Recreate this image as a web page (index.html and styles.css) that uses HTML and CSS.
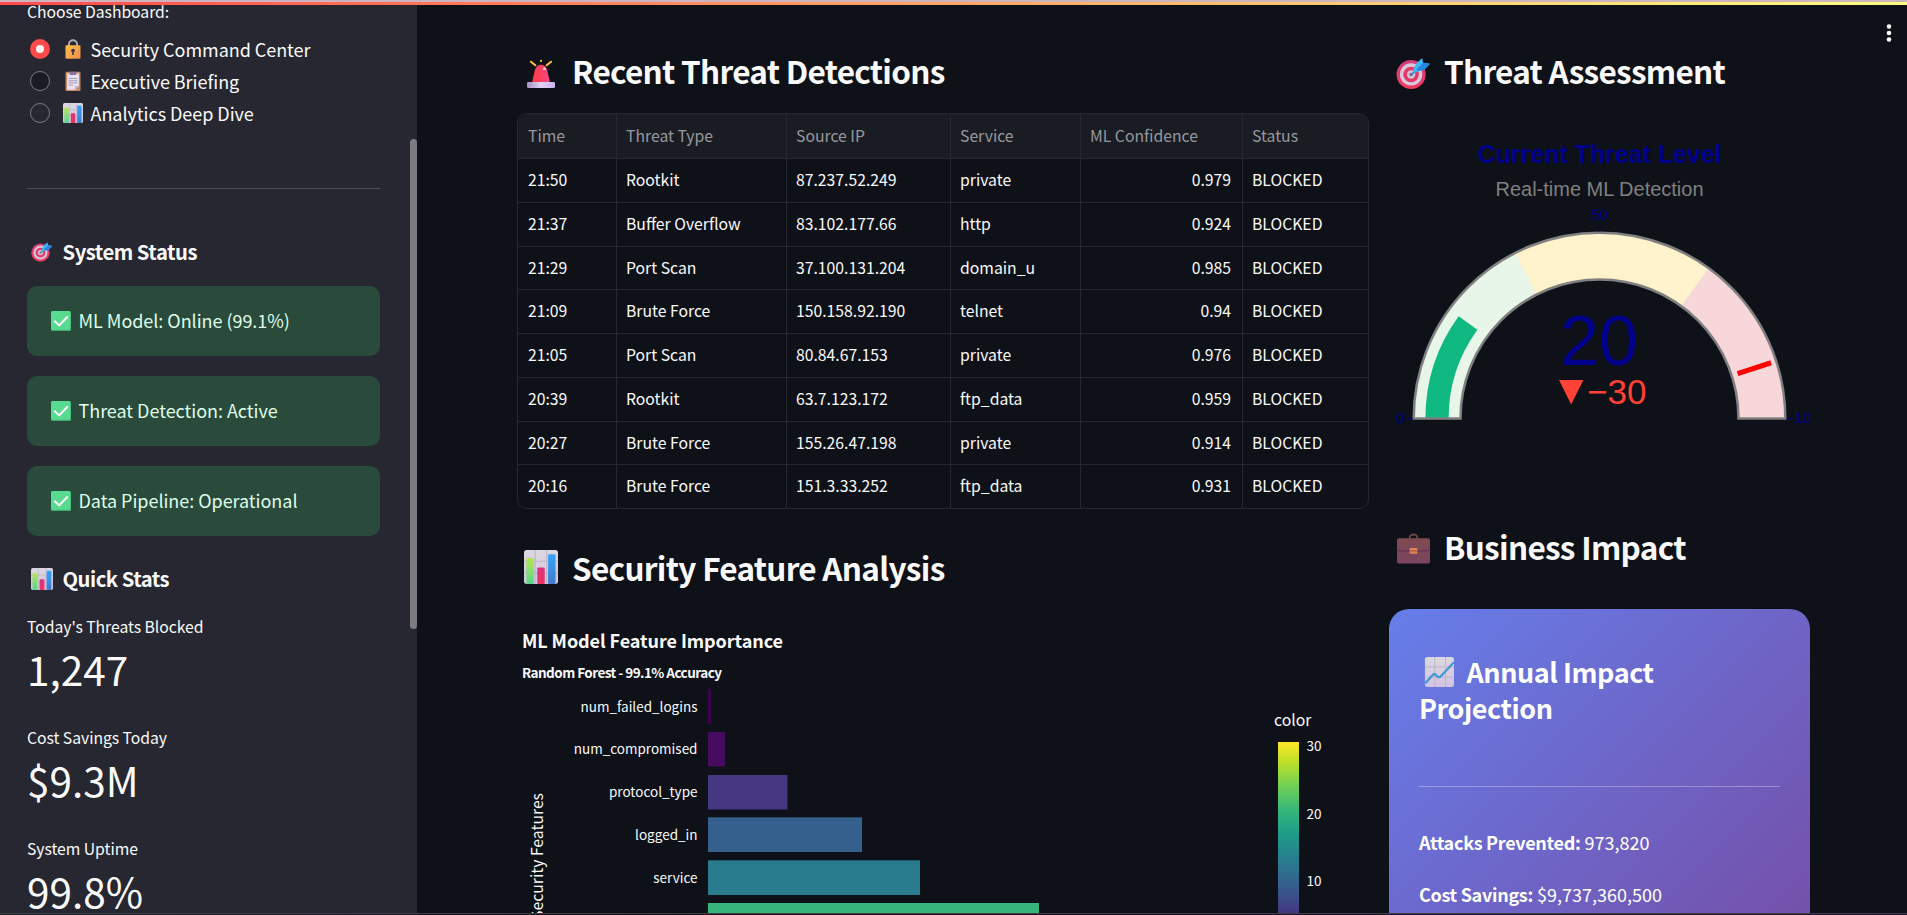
FILE: index.html
```html
<!DOCTYPE html>
<html lang="en">
<head>
<meta charset="utf-8">
<title>Security Dashboard</title>
<link rel="stylesheet" href="styles.css">
</head>
<body>
<svg class="defs" width="0" height="0" aria-hidden="true">
  <defs>
    <linearGradient id="gGold" x1="0" y1="0" x2="1" y2="1"><stop offset="0" stop-color="#fdc445"/><stop offset="1" stop-color="#f08a4b"/></linearGradient>
    <linearGradient id="gGreen" x1="0" y1="0" x2="0" y2="1"><stop offset="0" stop-color="#b5e550"/><stop offset="1" stop-color="#57d68d"/></linearGradient>
    <linearGradient id="gBlue" x1="0" y1="0" x2="0" y2="1"><stop offset="0" stop-color="#34a6f8"/><stop offset="1" stop-color="#3f7bd0"/></linearGradient>
    <linearGradient id="gPink" x1="0" y1="0" x2="0" y2="1"><stop offset="0" stop-color="#d7357f"/><stop offset="1" stop-color="#f0335f"/></linearGradient>
    <linearGradient id="gPaper" x1="0" y1="0" x2="0" y2="1"><stop offset="0" stop-color="#dcd8e0"/><stop offset="1" stop-color="#d3c4e2"/></linearGradient>
    <linearGradient id="gRed" x1="0" y1="0" x2="1" y2="0"><stop offset="0" stop-color="#ff3a3a"/><stop offset="1" stop-color="#f8468c"/></linearGradient>
    <linearGradient id="gBase" x1="0" y1="0" x2="1" y2="0"><stop offset="0" stop-color="#a58fc0"/><stop offset=".5" stop-color="#e3d5f5"/><stop offset="1" stop-color="#c9b0ee"/></linearGradient>
    <linearGradient id="gTarget" x1="0" y1="0" x2="0" y2="1"><stop offset="0" stop-color="#cf3f7c"/><stop offset="1" stop-color="#f23a5d"/></linearGradient>
    <linearGradient id="gCase" x1="0" y1="0" x2="0" y2="1"><stop offset="0" stop-color="#7f4b50"/><stop offset="1" stop-color="#7b4460"/></linearGradient>
    <linearGradient id="viridis" x1="0" y1="742" x2="0" y2="946" gradientUnits="userSpaceOnUse">
      <stop offset="0" stop-color="#fde725"/><stop offset=".111" stop-color="#b5de2b"/><stop offset=".222" stop-color="#6ece58"/><stop offset=".333" stop-color="#35b779"/><stop offset=".444" stop-color="#1f9e89"/><stop offset=".556" stop-color="#26828e"/><stop offset=".667" stop-color="#31688e"/><stop offset=".778" stop-color="#3e4989"/><stop offset=".889" stop-color="#482878"/><stop offset="1" stop-color="#440154"/>
    </linearGradient>
    <symbol id="lock" viewBox="0 0 32 32">
      <path d="M9.5 13V8.5a6.5 6.5 0 0 1 13 0V13" fill="none" stroke="#b4abbd" stroke-width="3"/>
      <rect x="4" y="10" width="24" height="21.5" rx="2" fill="url(#gGold)"/>
      <circle cx="16" cy="18.5" r="3" fill="#453455"/><path d="M14.7 19h2.6v6.5h-2.6z" fill="#453455"/>
    </symbol>
    <symbol id="clipboard" viewBox="0 0 32 32">
      <rect x="4" y="1" width="24" height="31" rx="2" fill="#c98a63"/>
      <path d="M6.500 4h19v20l-6 6h-13z" fill="#e9e0f2"/><path d="M25.500 24l-6 6v-6z" fill="#bfaed0"/>
      <rect x="10.500" y="1" width="11" height="5.500" rx="1.500" fill="#85789a"/>
      <path d="M9 12h14M9 15.500h14M9 19h14M9 22.500h7" stroke="#9a8fa8" stroke-width="1.300"/>
    </symbol>
    <symbol id="chart" viewBox="0 0 32 32">
      <rect width="32" height="32" rx="2.500" fill="url(#gPaper)"/>
      <path d="M10.500 0v32M21.500 0v32M0 10.500h32M0 21.500h32" stroke="#bdb3c8" stroke-width="1"/>
      <rect x="2.200" y="7.500" width="7" height="24.500" rx="1" fill="url(#gGreen)"/>
      <rect x="12.500" y="16.500" width="7" height="15.500" rx="1" fill="url(#gPink)"/>
      <rect x="22.700" y="4" width="7" height="28" rx="1" fill="url(#gBlue)"/>
    </symbol>
    <symbol id="target" viewBox="0 0 36 32">
      <circle cx="15.500" cy="17" r="15" fill="url(#gTarget)"/><circle cx="15.500" cy="17" r="11.500" fill="#d8c6dd"/>
      <circle cx="15.500" cy="17" r="8" fill="#e53868"/><circle cx="15.500" cy="17" r="4.300" fill="#cfc3d8"/><circle cx="15.500" cy="17" r="1.800" fill="#796d87"/>
      <path d="M16 17l9-8" stroke="#3a83c9" stroke-width="1.800"/>
      <path d="M17.500 12.500 21 5.500l6-5.500 1 5 7 1-6 6.500-6.500 1.500-4 1.500z" fill="#41b4f2"/><path d="M21 12l7-7 7 1-6 6.500-6.500 1z" fill="#2787e0"/>
    </symbol>
    <symbol id="check" viewBox="0 0 32 32">
      <rect width="32" height="32" rx="2.500" fill="#3fae72"/><rect width="31" height="30" rx="2.500" fill="#58db90"/>
      <path d="M6 16.500l7 6.500L26 9.500" fill="none" stroke="#fff" stroke-width="3.200" stroke-linecap="round" stroke-linejoin="round"/>
    </symbol>
    <symbol id="siren" viewBox="0 0 32 32">
      <path d="M4.500 2l5 4M27.500 2l-5 4M16 .8v.4" stroke="#fcc23c" stroke-width="2.400" stroke-linecap="round"/>
      <path d="M5.500 26.500 9 11.500C10 7.500 13 5.500 16 5.500s6 2 7 6l3.500 15z" fill="url(#gRed)"/>
      <circle cx="20" cy="10" r="1.800" fill="#ffc6c2"/>
      <rect x="0" y="25" width="32" height="7" rx="1.500" fill="url(#gBase)"/>
    </symbol>
    <symbol id="case" viewBox="0 0 34 32">
      <path d="M13 6.500V5a4 3.500 0 0 1 8 0v1.500" fill="none" stroke="#6f4743" stroke-width="2"/>
      <rect x="0" y="5.500" width="34" height="26" rx="2" fill="url(#gCase)"/>
      <path d="M0 15.500q0 3 3.500 3h27q3.500 0 3.500-3" fill="none" stroke="#653451" stroke-width="1.200"/>
      <rect x="13" y="15.500" width="8" height="6" rx=".8" fill="#dd8458"/><path d="M13 18.500h8" stroke="#9c4d4a"/>
    </symbol>
    <symbol id="trend" viewBox="0 0 32 32">
      <rect x="1" width="31" height="32" rx="2.500" fill="url(#gPaper)"/>
      <path d="M11.500 0v32M23 0v32M1 10.500h31M1 21.500h31" stroke="#bdb3c8" stroke-width="1"/>
      <path d="M1.500 28 9 19.500q2-2.300 4 0l1 1q2 2.300 4 0L32 5.500" fill="none" stroke="#3f97d5" stroke-width="2.400"/>
    </symbol>
  </defs>
</svg>

<div class="topbar"></div>
<svg class="kebab" viewBox="0 0 6 20"><circle cx="3" cy="3.500" r="2.300"/><circle cx="3" cy="10" r="2.300"/><circle cx="3" cy="16.500" r="2.300"/></svg>

<div class="app">
  <aside class="sidebar">
    <div class="nav-label">Choose Dashboard:</div>
    <div class="radio"><span class="dot on"></span><svg class="em"><use href="#lock"/></svg><span class="lbl">Security Command Center</span></div>
    <div class="radio"><span class="dot dark"></span><svg class="em"><use href="#clipboard"/></svg><span class="lbl">Executive Briefing</span></div>
    <div class="radio"><span class="dot"></span><svg class="em"><use href="#chart"/></svg><span class="lbl">Analytics Deep Dive</span></div>
    <hr class="rule">
    <h3 class="side-title"><svg class="em-t"><use href="#target"/></svg><span>System Status</span></h3>
    <div class="alerts">
      <div class="alert"><svg class="em"><use href="#check"/></svg><span class="lbl">ML Model: Online (99.1%)</span></div>
      <div class="alert"><svg class="em"><use href="#check"/></svg><span class="lbl">Threat Detection: Active</span></div>
      <div class="alert"><svg class="em"><use href="#check"/></svg><span class="lbl">Data Pipeline: Operational</span></div>
    </div>
    <h3 class="side-title stats-title"><svg class="em-t"><use href="#chart"/></svg><span>Quick Stats</span></h3>
    <div class="stats">
      <div class="stat"><div class="stat-label">Today's Threats Blocked</div><div class="stat-value">1,247</div></div>
      <div class="stat"><div class="stat-label">Cost Savings Today</div><div class="stat-value">$9.3M</div></div>
      <div class="stat"><div class="stat-label">System Uptime</div><div class="stat-value">99.8%</div></div>
    </div>
    <div class="scrollbar"></div>
  </aside>

  <main class="main">
    <section class="col-left">
      <h2 class="title"><svg class="em-h siren"><use href="#siren"/></svg><span>Recent Threat Detections</span></h2>
      <div class="table">
        <div class="tr th"><div>Time</div><div>Threat Type</div><div>Source IP</div><div>Service</div><div>ML Confidence</div><div>Status</div></div>
        <div class="tr"><div>21:50</div><div>Rootkit</div><div>87.237.52.249</div><div>private</div><div class="num">0.979</div><div>BLOCKED</div></div>
        <div class="tr"><div>21:37</div><div>Buffer Overflow</div><div>83.102.177.66</div><div>http</div><div class="num">0.924</div><div>BLOCKED</div></div>
        <div class="tr"><div>21:29</div><div>Port Scan</div><div>37.100.131.204</div><div>domain_u</div><div class="num">0.985</div><div>BLOCKED</div></div>
        <div class="tr"><div>21:09</div><div>Brute Force</div><div>150.158.92.190</div><div>telnet</div><div class="num">0.94</div><div>BLOCKED</div></div>
        <div class="tr"><div>21:05</div><div>Port Scan</div><div>80.84.67.153</div><div>private</div><div class="num">0.976</div><div>BLOCKED</div></div>
        <div class="tr"><div>20:39</div><div>Rootkit</div><div>63.7.123.172</div><div>ftp_data</div><div class="num">0.959</div><div>BLOCKED</div></div>
        <div class="tr"><div>20:27</div><div>Brute Force</div><div>155.26.47.198</div><div>private</div><div class="num">0.914</div><div>BLOCKED</div></div>
        <div class="tr"><div>20:16</div><div>Brute Force</div><div>151.3.33.252</div><div>ftp_data</div><div class="num">0.931</div><div>BLOCKED</div></div>
      </div>
      <h2 class="title second"><svg class="em-h"><use href="#chart"/></svg><span>Security Feature Analysis</span></h2>
      <svg class="plot" viewBox="517 588 852 327" width="852" height="327">
        <text class="p-title" x="522" y="648" textLength="261">ML Model Feature Importance</text>
        <text class="p-sub" x="522" y="678" textLength="200">Random Forest - 99.1% Accuracy</text>
        <g class="tick" text-anchor="end">
          <text x="697.500" y="711.500">num_failed_logins</text><text x="697.500" y="754">num_compromised</text><text x="697.500" y="797">protocol_type</text><text x="697.500" y="840">logged_in</text><text x="697.500" y="882.500">service</text>
        </g>
        <rect x="708" y="689" width="3" height="35" fill="#3b034c"/>
        <rect x="708" y="732" width="17" height="34.500" fill="#460b5e"/>
        <rect x="708" y="775" width="79.500" height="34.500" fill="#443680"/>
        <rect x="708" y="817.300" width="154" height="34.700" fill="#355f8d"/>
        <rect x="708" y="860.300" width="212" height="34.700" fill="#297b8e"/>
        <rect x="708" y="903" width="331" height="34.700" fill="#35b57a"/>
        <text class="axis" transform="translate(542.500 793) rotate(-90)" text-anchor="end">Security Features</text>
        <text class="axis" x="1274" y="726">color</text>
        <rect x="1278" y="742" width="21" height="204" fill="url(#viridis)"/>
        <g class="tick"><text x="1306.500" y="751">30</text><text x="1306.500" y="818.500">20</text><text x="1306.500" y="885.500">10</text></g>
      </svg>
    </section>

    <section class="col-right">
      <h2 class="title"><svg class="em-h wide"><use href="#target"/></svg><span>Threat Assessment</span></h2>
      <svg class="gauge" viewBox="1389 91 421 434" width="421" height="434">
        <text class="g-title" x="1599.500" y="163" textLength="244">Current Threat Level</text>
        <text class="g-sub" x="1599.500" y="195.500" textLength="208">Real-time ML Detection</text>
        <g fill="none" stroke-width="46.500" transform="translate(1599.500 418.500)">
          <path stroke="#f8d7da" d="M73.860-144.970A162.700 162.700 0 0 1 162.700 0"/>
          <path stroke="#fff3cd" d="M-95.630-131.630A162.700 162.700 0 0 1 95.630-131.630"/>
          <path stroke="#e8f5e9" d="M-162.700 0A162.700 162.700 0 0 1-73.860-144.970"/>
          <path stroke="#10b981" stroke-width="23.200" d="M-162.500 0A162.500 162.500 0 0 1-131.460-95.520"/>
          <path stroke="#808080" stroke-width="2.500" d="M-185.800 0A185.800 185.800 0 0 1 185.800 0H139A139 139 0 0 0-139 0Z"/>
          <path stroke="#f00" stroke-width="5" d="M138.100-44.870 171.570-55.750"/>
          <path stroke="#00008b" stroke-width="1.250" d="M0-187v-6M-187 0h-6M187 0h6"/>
        </g>
        <g class="g-tick"><text x="1599.500" y="220">50</text><text x="1400.200" y="423">0</text><text class="start" x="1794.500" y="423">100</text></g>
        <text class="g-num" x="1599" y="365">20</text>
        <path fill="#ff4136" d="M1559 380h24.300l-12.100 24.500z"/>
        <text class="g-delta" x="1587" y="403.500">−30</text>
      </svg>
      <h2 class="title"><svg class="em-h case"><use href="#case"/></svg><span>Business Impact</span></h2>
      <div class="impact">
        <h3><svg class="em-a"><use href="#trend"/></svg>Annual Impact Projection</h3>
        <hr>
        <p><b>Attacks Prevented:</b> 973,820</p>
        <p><b>Cost Savings:</b> $9,737,360,500</p>
      </div>
    </section>
  </main>
</div>
<div class="bottombar"></div>
</body>
</html>
```

FILE: styles.css
```css
* { box-sizing: border-box; }
html, body { margin: 0; height: 100%; overflow: hidden; }
body {
  background: #0e1117;
  color: #fafafa;
  font-family: "Noto Sans CJK SC", "Noto Sans", sans-serif;
  font-size: 18px;
}
h2, h3, p, hr { margin: 0; }
svg { flex: none; }
.defs { position: absolute; }

.topbar {
  position: absolute; inset: 0 0 auto; height: 5px; z-index: 5;
  background: linear-gradient(90deg, #ff4b4b, #ffff80);
  border-top: 2px solid #cdb5bf;
}
.kebab { position: absolute; right: 15px; top: 22.5px; width: 6px; height: 20px; fill: #fafafa; z-index: 4; }
.bottombar {
  position: absolute; inset: 913px 0 auto; height: 2px; z-index: 5;
  background: linear-gradient(90deg, #1b2226, #1d1028 40%, #2a1240);
  border-top: 1px solid #3d3d42;
}

.app { display: flex; height: 915px; overflow: hidden; }

/* Sidebar */
.sidebar {
  position: relative; flex: none; width: 417px; height: 915px; overflow: hidden;
  padding: 0 37px 0 27px; background: #262730;
}
.nav-label { margin-top: -1px; height: 26px; line-height: 26px; font-size: 15.75px; margin-bottom: 8px; letter-spacing: -.05px; }
.radio { display: flex; align-items: center; height: 32px; padding-left: 3px; line-height: 30px; }
.lbl { letter-spacing: -.04px; }
.dot {
  width: 20px; height: 20px; border-radius: 50%; margin-right: 13px;
  border: 1.5px solid #7c7d83;
}
.dot.dark { background: #1a1c24; }
.dot.on { border: 6.500px solid #ff4b4b; background: #fafafa; }
.em { width: 20px; height: 20px; margin-right: 7.5px; }
.radio .lbl, .alert .lbl { padding-bottom: 1px; }
.rule { height: 1px; border: 0; background: #4f5059; margin: 59px 0 47px; }
.side-title { display: flex; align-items: center; height: 30px; line-height: 30px; padding: 1px 0 0 4px; font-size: 20.25px; }
.side-title span { letter-spacing: -.5px; }
.em-t { width: 22px; height: 22px; margin-right: 9.5px; }
.alerts { display: flex; flex-direction: column; gap: 20px; margin: 20px 0 27px; }
.alert {
  display: flex; align-items: center; height: 70px; padding: 0 24px 1px;
  border-radius: 10px; background: #2a4a3b; color: #dffde9;
}
.stats { display: flex; flex-direction: column; gap: 29px; margin-top: 21px; }
.stat-label { height: 26px; line-height: 26px; font-size: 15.75px; margin-bottom: 2px; letter-spacing: -.05px; }
.stat-value { height: 54px; line-height: 54px; font-size: 40.5px; }
.scrollbar { position: absolute; right: 0; top: 139px; width: 7px; height: 490px; border-radius: 4px; background: #7c7b82; }

/* Main area */
.main { display: flex; gap: 20px; padding: 49px 0 0 100px; flex: none; }
.col-left { width: 852px; }
.col-right { width: 421px; }
.title { display: flex; align-items: center; height: 42px; line-height: 42px; font-size: 31.5px; padding-left: 7px; white-space: nowrap; letter-spacing: -.7px; }
.title.second { margin-top: 37px; }
.em-h { width: 34px; height: 34px; margin-right: 14px; }
.em-h.siren { width: 28px; height: 30px; margin: 7px 17px 0 3px; }
.em-h.wide, .em-h.case { width: 35px; height: 31px; margin: 6px 13px 0 0; }
.em-h.case { margin-top: 4px; }

.table {
  margin-top: 22px; height: 396px; overflow: hidden;
  border: 1px solid #262830; border-radius: 10px; font-size: 15.75px;
}
.tr { display: grid; grid-template-columns: 99px 170px 164px 130px 162px 1fr; height: 43.75px; line-height: 41.5px; }
.tr > div { padding: 0 11px 0 9px; border-right: 1px solid #262830; border-bottom: 1px solid #262830; white-space: nowrap; }
.tr > div:first-child { padding-left: 10px; }
.tr > div:last-child { border-right: 0; }
.tr:last-child > div { border-bottom: 0; }
.th { height: 45px; line-height: 43.5px; background: #1a1c24; color: #97989d; }
.num { text-align: right; }

.plot, .gauge { display: block; }
.plot text { fill: #fafafa; }
.plot .p-title { font-size: 18px; font-weight: 700; }
.plot .p-sub { font-size: 13.5px; font-weight: 700; }
.plot .tick { font-size: 13.5px; }
.plot .axis { font-size: 15.75px; }

.gauge text { font-family: "Liberation Sans", Arial, sans-serif; text-anchor: middle; fill: #00008b; }
.gauge .g-title { font-size: 25px; font-weight: 700; }
.gauge .g-sub { font-size: 20px; fill: #808080; }
.gauge .g-tick { font-size: 15px; }
.gauge .start { text-anchor: start; }
.gauge .g-num { font-size: 70px; }
.gauge .g-delta { font-size: 35px; text-anchor: start; fill: #ff4136; }

.impact {
  margin-top: 42px; height: 400px; padding: 45px 30px 0; border-radius: 20px;
  background: linear-gradient(135deg, #667eea, #764ba2); color: #fff;
}
.impact h3 { font-size: 27px; line-height: 36px; letter-spacing: -.45px; }
.em-a { width: 30px; height: 30px; margin: 0 12.5px 0 5px; vertical-align: -4px; }
.impact hr { height: 1px; border: 0; background: #ffffff50; margin: 60px 0 40px; }
.impact p { height: 30px; line-height: 30px; margin-bottom: 22px; white-space: nowrap; }
.impact b { letter-spacing: -.3px; }
```
